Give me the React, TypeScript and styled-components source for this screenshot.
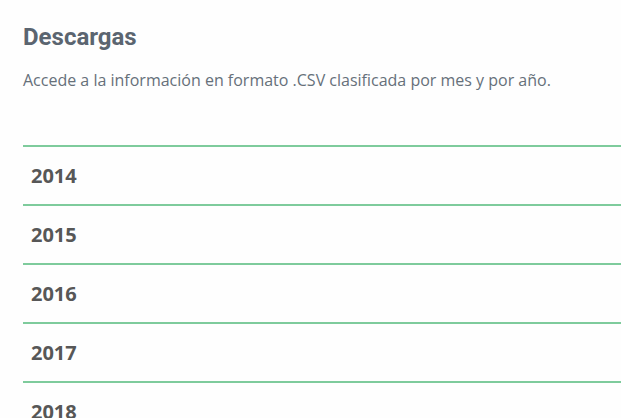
import { FC } from 'react'
import styled, { createGlobalStyle } from 'styled-components'

const GlobalStyle = createGlobalStyle`
  html, body {
    margin: 0;
    padding: 0;
    background: #fefefe;
  }
  body {
    font-family: 'Open Sans', 'Liberation Sans', sans-serif;
    overflow: hidden;
  }
`

const Page = styled.div`
  padding: 23px 0 0 23px;
`

const Title = styled.h2`
  font-family: Roboto, 'Liberation Sans', sans-serif;
  font-size: 24px;
  font-weight: 700;
  color: #5b6570;
  margin: 0;
  line-height: 28px;
`

const Intro = styled.p`
  font-size: 16px;
  color: #66707a;
  margin: 18px 0 0;
  line-height: 22px;
`

const YearList = styled.ul`
  list-style: none;
  margin: 54px 0 0;
  padding: 0;
`

const YearRow = styled.li`
  border-top: 2px solid #7ecb9c;
  height: 57px;
  display: flex;
  align-items: center;
  padding-left: 8px;
  font-size: 20px;
  font-weight: 700;
  color: #575757;
`

const years = [2014, 2015, 2016, 2017, 2018]

const App: FC = () => {
  return (
    <Page>
      <GlobalStyle />
      <Title>Descargas</Title>
      <Intro>Accede a la información en formato .CSV clasificada por mes y por año.</Intro>
      <YearList>
        {years.map((y) => (
          <YearRow key={y}>{y}</YearRow>
        ))}
      </YearList>
    </Page>
  )
}

export default App
